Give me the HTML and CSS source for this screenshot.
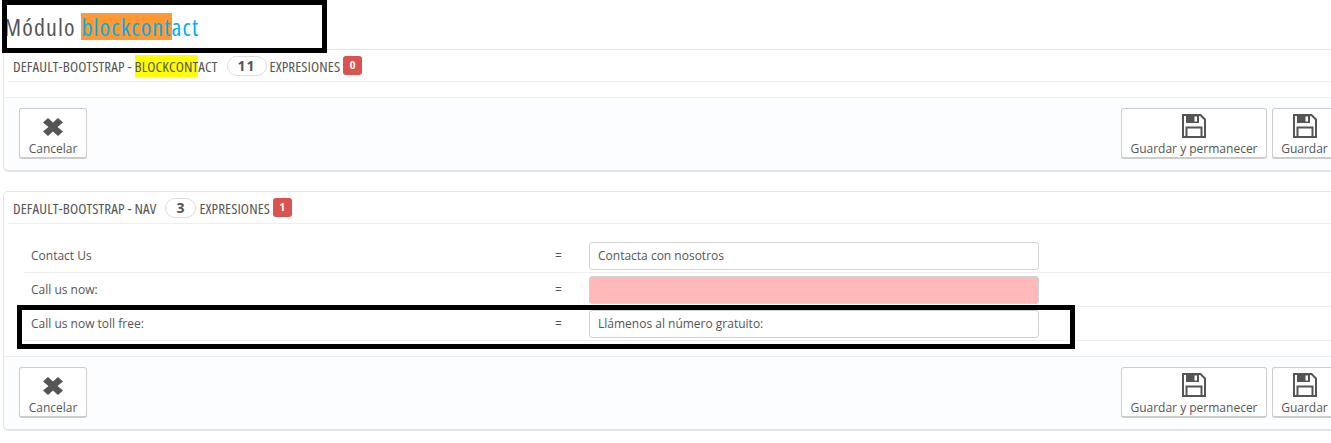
FILE: index.html
```html
<!DOCTYPE html>
<html lang="es">
<head>
    <meta charset="UTF-8">
    <meta name="viewport" content="width=device-width, initial-scale=1.0">
    <title>Traducciones | blockcontact</title>
    <link rel="stylesheet" href="styles.css">
</head>
<body>
    <h2 class="page-title">Módulo <span class="module-name"><mark class="hl-orange">blockcont</mark>act</span></h2>

    <section class="panel">
        <h3 class="panel-heading">
            <span>default-bootstrap - <mark class="hl-yellow">blockcont</mark>act</span>
            <span class="count">11</span>
            <span>expresiones</span>
            <span class="badge">0</span>
        </h3>
        <div class="panel-spacer"></div>
        <div class="panel-footer">
            <button class="btn btn-cancel">
                <svg class="icon-x" viewBox="0 0 20 18"><path d="M5 0 10 4.5 15 0 20 4.5 14.5 9 20 13.5 15 18 10 13.5 5 18 0 13.5 5.5 9 0 4.5Z"/></svg>
                Cancelar
            </button>
            <button class="btn btn-save">
                <svg class="icon-save" viewBox="0 0 24 24"><path class="outline" d="M1 1H18.5L23 5.5V23H1Z"/><path class="fill" d="M4 1H17V9H4Z"/><path class="hole" d="M12.5 2.5H15V7.5H12.5Z"/><path class="outline" d="M4.5 22.5V13.5H19.5V22.5"/></svg>
                Guardar y permanecer
            </button>
            <button class="btn btn-save">
                <svg class="icon-save" viewBox="0 0 24 24"><path class="outline" d="M1 1H18.5L23 5.5V23H1Z"/><path class="fill" d="M4 1H17V9H4Z"/><path class="hole" d="M12.5 2.5H15V7.5H12.5Z"/><path class="outline" d="M4.5 22.5V13.5H19.5V22.5"/></svg>
                Guardar
            </button>
        </div>
    </section>

    <section class="panel">
        <h3 class="panel-heading">
            <span>default-bootstrap - nav</span>
            <span class="count count-small">3</span>
            <span>expresiones</span>
            <span class="badge">1</span>
        </h3>
        <div class="rows">
            <div class="row">
                <span>Contact Us</span>
                <span>=</span>
                <input class="field" type="text" value="Contacta con nosotros">
            </div>
            <div class="row">
                <span>Call us now:</span>
                <span>=</span>
                <input class="field field-empty" type="text">
            </div>
            <div class="row">
                <span>Call us now toll free:</span>
                <span>=</span>
                <input class="field" type="text" value="Llámenos al número gratuito:">
            </div>
        </div>
        <div class="panel-footer">
            <button class="btn btn-cancel">
                <svg class="icon-x" viewBox="0 0 20 18"><path d="M5 0 10 4.5 15 0 20 4.5 14.5 9 20 13.5 15 18 10 13.5 5 18 0 13.5 5.5 9 0 4.5Z"/></svg>
                Cancelar
            </button>
            <button class="btn btn-save">
                <svg class="icon-save" viewBox="0 0 24 24"><path class="outline" d="M1 1H18.5L23 5.5V23H1Z"/><path class="fill" d="M4 1H17V9H4Z"/><path class="hole" d="M12.5 2.5H15V7.5H12.5Z"/><path class="outline" d="M4.5 22.5V13.5H19.5V22.5"/></svg>
                Guardar y permanecer
            </button>
            <button class="btn btn-save">
                <svg class="icon-save" viewBox="0 0 24 24"><path class="outline" d="M1 1H18.5L23 5.5V23H1Z"/><path class="fill" d="M4 1H17V9H4Z"/><path class="hole" d="M12.5 2.5H15V7.5H12.5Z"/><path class="outline" d="M4.5 22.5V13.5H19.5V22.5"/></svg>
                Guardar
            </button>
        </div>
    </section>

    <div class="callout callout-title"></div>
    <div class="callout callout-row"></div>
</body>
</html>
```

FILE: styles.css
```css
:root{
    --text: #555;
    --line: #eee;
    --panel-line: #e6e6e6;
    --footer-bg: #fcfdfe;
    --red: #d9534f;
    --blue: #00aff0;
}
html,body{
    height: 100%;
    overflow: hidden;
}
body{
    margin: 0;
    position: relative;
    background-color: #fff;
    color: var(--text);
    font-family: "Open Sans", sans-serif;
    font-size: 12px;
}
.page-title{
    height: 49px;
    margin: 0;
    padding-left: 4px;
    font-family: "Open Sans", sans-serif;
    font-stretch: 75%;
    font-size: 24px;
    letter-spacing: 1.15px;
    font-weight: 400;
    line-height: 54px;
}
.module-name{
    color: var(--blue);
}
.hl-orange{
    display: inline-block;
    background-color: #ff9933;
    color: inherit;
    line-height: 27px;
}
.hl-yellow{
    display: inline-block;
    background-color: #ffff00;
    color: inherit;
    line-height: 22px;
}
.panel{
    width: 1350px;
    margin: 0 0 19px 3px;
    border: 1px solid var(--panel-line);
    border-bottom: 0;
    border-radius: 5px;
    box-sizing: border-box;
}
.panel-heading{
    display: flex;
    align-items: center;
    height: 31px;
    margin: 0 0 0 4px;
    padding-left: 5px;
    border-bottom: 1px solid var(--line);
    font-family: "Open Sans", sans-serif;
    font-stretch: 75%;
    font-size: 15px;
    letter-spacing: .1px;
    font-weight: 400;
    text-transform: uppercase;
}
.count{
    width: 40px;
    height: 20px;
    margin: 0 3px 0 9px;
    border: 1px solid #ddd;
    border-radius: 10px;
    box-sizing: border-box;
    font-stretch: 100%;
    font-size: 14px;
    font-weight: 700;
    line-height: 18px;
    letter-spacing: 1px;
    text-align: center;
}
.count-small{
    width: 31px;
}
.badge{
    width: 19px;
    height: 19px;
    margin-left: 3px;
    border-radius: 3px;
    background-color: var(--red);
    color: #fff;
    font-size: 10px;
    font-stretch: 100%;
    font-weight: 700;
    line-height: 19px;
    text-align: center;
}
.panel-spacer{
    height: 15px;
}
.rows{
    margin-left: 20px;
    padding-top: 15px;
    padding-bottom: 15px;
}
.row{
    display: grid;
    grid-template-columns: 524px 34px 450px;
    align-items: center;
    height: 33px;
    padding-left: 7px;
    border-bottom: 1px solid var(--line);
}
.field{
    width: 450px;
    height: 28px;
    padding: 0 8px;
    border: 1px solid #d3d3d3;
    border-radius: 3px;
    box-sizing: border-box;
    background-color: #fff;
    color: var(--text);
    font-family: "Open Sans", sans-serif;
    font-size: 12px;
}
.field-empty{
    background-color: #ffb9b9;
}
.panel-footer{
    display: flex;
    gap: 5px;
    height: 62px;
    padding: 10px 15px 0;
    border-top: 1px solid var(--line);
    border-bottom: 2px solid #e3e3e3;
    background-color: var(--footer-bg);
    border-radius: 0 0 5px 5px;
}
.btn{
    display: flex;
    flex-direction: column;
    align-items: center;
    justify-content: flex-start;
    height: 51px;
    padding: 5px 0 0;
    border: 1px solid #ccc;
    border-bottom-width: 2px;
    border-radius: 3px;
    box-sizing: border-box;
    background-color: #fff;
    color: var(--text);
    font-family: "Open Sans", sans-serif;
    font-size: 12px;
    line-height: 16px;
}
.btn-cancel{
    width: 68px;
    margin-right: auto;
    padding-top: 9px;
}
.btn-save:nth-child(2){
    width: 146px;
}
.btn-save:nth-child(3){
    width: 65px;
}
.icon-x{
    width: 20px;
    height: 18px;
    margin-bottom: 5px;
    fill: var(--text);
}
.icon-save{
    width: 24px;
    height: 24px;
    margin-bottom: 3px;
}
.icon-save .outline{
    fill: none;
    stroke: var(--text);
    stroke-width: 2;
}
.icon-save .fill{
    fill: var(--text);
}
.icon-save .hole{
    fill: #fff;
}
.callout{
    position: absolute;
    border: 5px solid #000;
    box-sizing: border-box;
}
.callout-title{
    left: 2px;
    top: 0;
    width: 325px;
    height: 53px;
}
.callout-row{
    left: 17px;
    top: 305px;
    width: 1058px;
    height: 44px;
}
```
